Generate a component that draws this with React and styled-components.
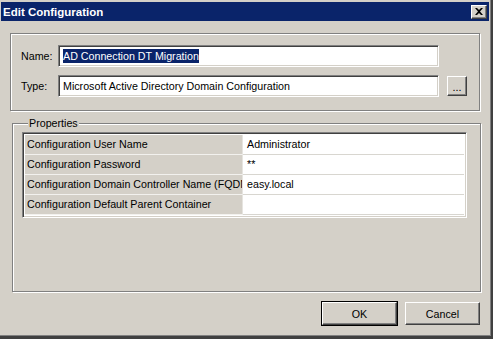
import React from "react";
import styled, { createGlobalStyle } from "styled-components";

const Global = createGlobalStyle`
  html, body { margin: 0; padding: 0; background: #d4d0c8; }
  body { font-family: "Liberation Sans", Arial, sans-serif; font-size: 10.7px; color: #000; }
`;

const Window = styled.div`
  width: 493px;
  height: 339px;
  box-sizing: border-box;
  background: #d4d0c8;
  padding: 2px 1px 0 1px;
  border-right: 2px solid #404040;
  border-bottom: 3px solid #404040;
  box-shadow: inset -1px -1px 0 #808080;
  display: flex;
  flex-direction: column;
`;

const TitleBar = styled.div`
  height: 19px;
  width: 488px;
  background: #0a246a;
  color: #fff;
  font-weight: bold;
  font-size: 11.5px;
  display: flex;
  align-items: center;
  justify-content: space-between;
  padding: 0 2px 0 2px;
  box-sizing: border-box;
`;

const Raised = styled.div`
  box-sizing: border-box;
  background: #d4d0c8;
  border-top: 1px solid #fff;
  border-left: 1px solid #fff;
  border-right: 1px solid #404040;
  border-bottom: 1px solid #404040;
  box-shadow: inset -1px -1px 0 #808080;
  display: flex;
  align-items: center;
  justify-content: center;
`;

const CloseBtn = styled(Raised)`
  width: 16px;
  height: 14px;
`;

const Body = styled.div`
  display: flex;
  flex-direction: column;
  align-items: flex-start;
  padding: 12px 0 0 9px;
`;

const TopGroup = styled.div`
  width: 470px;
  height: 78px;
  box-sizing: border-box;
  border: 1px solid #808080;
  box-shadow: inset 1px 1px 0 #fff, 1px 1px 0 #fff;
  padding: 11px 0 0 10px;
  display: flex;
  flex-direction: column;
  gap: 8px;
`;

const FieldRow = styled.div`
  display: flex;
  align-items: center;
`;

const Label = styled.div`
  width: 37px;
  flex: none;
`;

const TextBox = styled.div`
  width: 381px;
  height: 22px;
  box-sizing: border-box;
  background: #fff;
  border-top: 1px solid #808080;
  border-left: 1px solid #808080;
  border-right: 1px solid #fff;
  border-bottom: 1px solid #fff;
  box-shadow: inset 1px 1px 0 #404040, inset -1px -1px 0 #d4d0c8;
  padding: 0 0 0 4px;
  display: flex;
  align-items: center;
  white-space: nowrap;
  overflow: hidden;
`;

const Selected = styled.span`
  background: #0a246a;
  color: #fff;
  padding: 1px 0;
`;

const BrowseBtn = styled(Raised)`
  width: 20px;
  height: 20px;
  margin-left: 8px;
  padding-top: 2px;
`;

const Fieldset = styled.fieldset`
  margin: 6px 0 0 2px;
  width: 469px;
  height: 175px;
  box-sizing: border-box;
  padding: 3px 13px 13px 9px;
  border: 1px solid #808080;
  box-shadow: inset 1px 1px 0 #fff, 1px 1px 0 #fff;
  display: flex;
  flex-direction: column;
`;

const Legend = styled.legend`
  margin-left: 6px;
  padding: 0 1px;
  background: #d4d0c8;
`;

const Grid = styled.div`
  flex: 1;
  background: #fff;
  border-top: 1px solid #808080;
  border-left: 1px solid #808080;
  border-right: 1px solid #fff;
  border-bottom: 1px solid #fff;
  box-shadow: inset 1px 1px 0 #404040, inset -1px -1px 0 #d4d0c8;
  padding: 2px;
  display: flex;
  flex-direction: column;
`;

const Row = styled.div`
  display: grid;
  grid-template-columns: 218px 1fr;
  height: 20px;
`;

const NameCell = styled.div`
  background: #d4d0c8;
  border-bottom: 1px solid #f2f1ee;
  border-right: 1px solid #e6e4df;
  padding-left: 2px;
  line-height: 19px;
  white-space: nowrap;
  overflow: hidden;
  text-overflow: clip;
`;

const ValueCell = styled.div`
  border-bottom: 1px solid #d8d6d0;
  padding-left: 4px;
  line-height: 19px;
  white-space: nowrap;
  overflow: hidden;
`;

const Footer = styled.div`
  width: 470px;
  display: flex;
  justify-content: flex-end;
  gap: 8px;
  margin-top: 10px;
`;

const DialogButton = styled(Raised)`
  width: 75px;
  height: 23px;
  outline: ${(p) => (p.$default ? "1px solid #000" : "none")};
`;

const rows = [
  ["Configuration User Name", "Administrator"],
  ["Configuration Password", "**"],
  ["Configuration Domain Controller Name (FQDN)", "easy.local"],
  ["Configuration Default Parent Container", ""],
];

export default function App() {
  return (
    <>
      <Global />
      <Window>
        <TitleBar>
          <span>Edit Configuration</span>
          <CloseBtn>
            <svg width="8" height="7" viewBox="0 0 8 7">
              <path d="M0 0h2l2 2 2-2h2L5 3.5 8 7H6L4 5 2 7H0l3-3.5z" fill="#000" />
            </svg>
          </CloseBtn>
        </TitleBar>
        <Body>
          <TopGroup>
            <FieldRow>
              <Label>Name:</Label>
              <TextBox>
                <Selected>AD Connection DT Migration</Selected>
              </TextBox>
            </FieldRow>
            <FieldRow>
              <Label>Type:</Label>
              <TextBox>Microsoft Active Directory Domain Configuration</TextBox>
              <BrowseBtn>...</BrowseBtn>
            </FieldRow>
          </TopGroup>
          <Fieldset>
            <Legend>Properties</Legend>
            <Grid>
              {rows.map(([k, v]) => (
                <Row key={k}>
                  <NameCell>{k}</NameCell>
                  <ValueCell>{v}</ValueCell>
                </Row>
              ))}
            </Grid>
          </Fieldset>
          <Footer>
            <DialogButton $default>OK</DialogButton>
            <DialogButton>Cancel</DialogButton>
          </Footer>
        </Body>
      </Window>
    </>
  );
}
